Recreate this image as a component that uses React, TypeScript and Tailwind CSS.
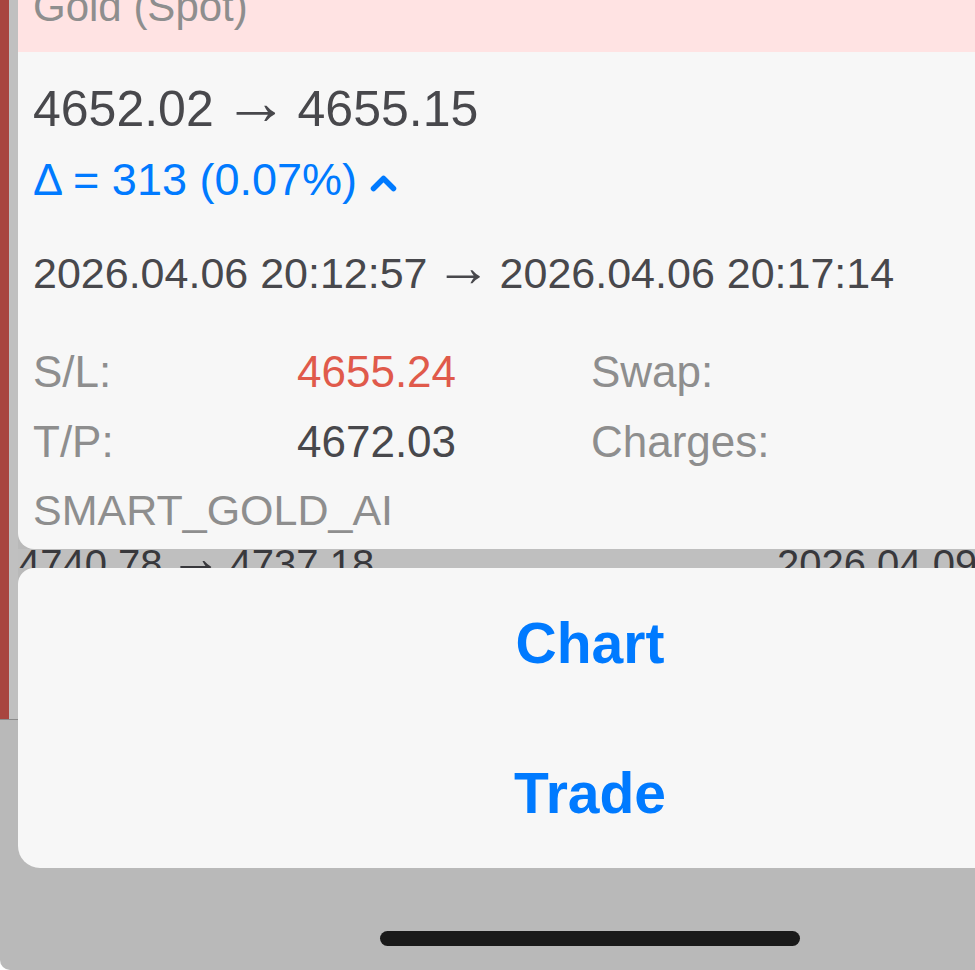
import React from "react";

function Arr() {
  return <span className="inline-block mx-[0.06em] scale-[1.3] translate-y-[-0.15em]">→</span>;
}

export default function App() {
  return (
    <div className="w-[975px] h-[970px] overflow-hidden flex bg-[#b9b9b9] rounded-bl-[10px] font-['Liberation_Sans',Arial,sans-serif]">
      {/* left edge of the underlying screen */}
      <div className="w-[18px] shrink-0 flex flex-col">
        <div className="h-[719px] flex">
          <div className="w-[9px] bg-[#a8453f]" />
          <div className="w-[9px] bg-[#c0c0c0]" />
        </div>
        <div className="h-px bg-[#8c8c8c]" />
      </div>

      {/* sheet column */}
      <div className="w-[1144px] shrink-0 flex flex-col">
        {/* detail card */}
        <div className="bg-[#f7f7f7] rounded-bl-[16px] overflow-hidden pb-[17px]">
          <div className="h-[52px] bg-[#ffe3e3] pl-[15px] overflow-hidden">
            <div className="text-[42px] leading-none mt-[-14px] text-[#8e8e8e] whitespace-nowrap">Gold (Spot)</div>
          </div>
          <div className="pl-[15px]">
            <div className="mt-[32px] h-[50px] text-[50px] leading-none text-[#48484c] whitespace-nowrap">
              4652.02 <Arr /> 4655.15
            </div>
            <div className="mt-[23px] flex items-start">
              <span className="text-[45px] leading-none text-[#007aff] whitespace-nowrap">Δ = 313 (0.07%)</span>
              <svg className="ml-[13px] mt-[18px]" width="27" height="17" viewBox="0 0 27 17">
                <polyline points="3.5,13.5 13.5,3.5 23.5,13.5" fill="none" stroke="#007aff" strokeWidth="5.5" strokeLinecap="round" strokeLinejoin="round" />
              </svg>
            </div>
            <div className="mt-[50px] h-[43px] text-[43px] leading-none text-[#48484c] whitespace-nowrap">
              2026.04.06 20:12:57 <Arr /> 2026.04.06 20:17:14
            </div>
            <div className="mt-[55px] grid grid-cols-[264px_294px_1fr] text-[44px] leading-none whitespace-nowrap">
              <span className="text-[#8e8e8e]">S/L:</span>
              <span className="text-[#e05a4b]">4655.24</span>
              <span className="text-[#8e8e8e]">Swap:</span>
            </div>
            <div className="mt-[26px] grid grid-cols-[264px_294px_1fr] text-[44px] leading-none whitespace-nowrap">
              <span className="text-[#8e8e8e]">T/P:</span>
              <span className="text-[#48484c]">4672.03</span>
              <span className="text-[#8e8e8e]">Charges:</span>
            </div>
            <div className="mt-[25px] text-[43px] leading-none text-[#8e8e8e] whitespace-nowrap">SMART_GOLD_AI</div>
          </div>
        </div>

        {/* glimpse of the list row behind */}
        <div className="h-[19px] bg-[#bfbfbf] overflow-hidden">
          <div className="flex mt-[-5px] h-[40px] text-[40px] leading-none text-[#38383c] whitespace-nowrap">
            <span className="w-[759px] shrink-0">
              4740.78 <Arr /> 4737.18
            </span>
            <span>2026.04.09</span>
          </div>
        </div>

        {/* action sheet */}
        <div className="bg-[#f7f7f7] rounded-tl-[16px] rounded-bl-[22px] flex flex-col">
          <div className="h-[150px] flex items-center justify-center text-[57px] leading-none font-bold text-[#007aff]">Chart</div>
          <div className="h-[150px] flex items-center justify-center text-[57px] leading-none font-bold text-[#007aff]">Trade</div>
        </div>

        {/* home indicator */}
        <div className="mt-[63px] mx-auto w-[420px] h-[15px] rounded-full bg-[#1a1a1a]" />
      </div>
    </div>
  );
}
